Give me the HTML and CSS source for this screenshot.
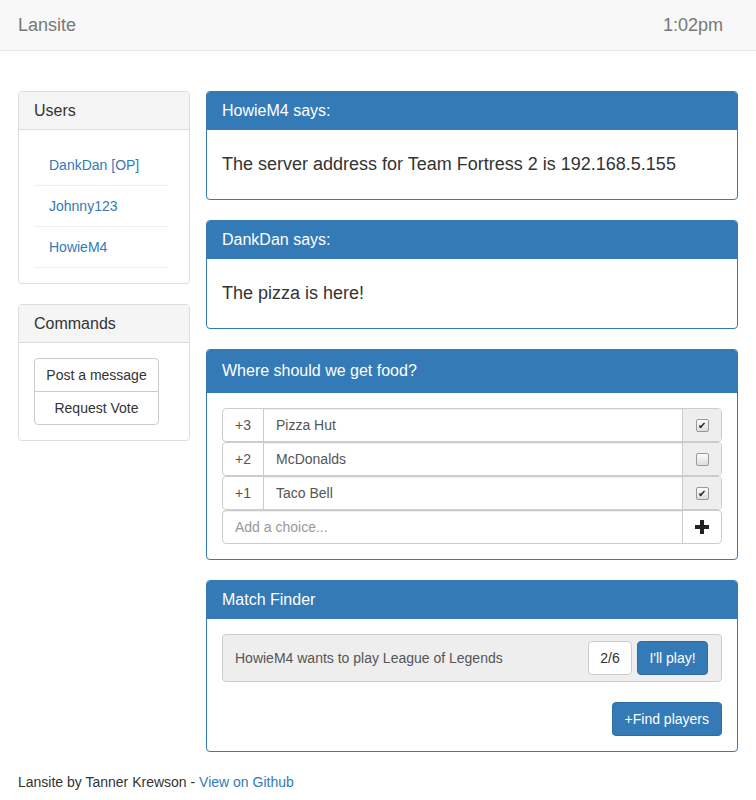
FILE: index.html
```html
<!DOCTYPE html>
<html>
<head>
<meta charset="utf-8">
<link rel="stylesheet" href="styles.css">
</head>
<body>
<nav class="navbar">
  <span class="brand">Lansite</span>
  <span class="clock">1:02pm</span>
</nav>
<main class="main">
  <aside class="side">
    <section class="panel panel-default">
      <div class="panel-heading">Users</div>
      <div class="panel-body">
        <ul class="user-list">
          <li><a href="#">DankDan [OP]</a></li>
          <li><a href="#">Johnny123</a></li>
          <li><a href="#">HowieM4</a></li>
        </ul>
      </div>
    </section>
    <section class="panel panel-default">
      <div class="panel-heading">Commands</div>
      <div class="panel-body">
        <div class="btn-group-vertical">
          <button class="btn">Post a message</button>
          <button class="btn">Request Vote</button>
        </div>
      </div>
    </section>
  </aside>
  <div class="stream">
    <section class="panel panel-primary">
      <div class="panel-heading">HowieM4 says:</div>
      <div class="panel-body"><h4 class="msg">The server address for Team Fortress 2 is 192.168.5.155</h4></div>
    </section>
    <section class="panel panel-primary">
      <div class="panel-heading">DankDan says:</div>
      <div class="panel-body"><h4 class="msg">The pizza is here!</h4></div>
    </section>
    <section class="panel panel-primary">
      <div class="panel-heading tall">Where should we get food?</div>
      <div class="panel-body">
        <div class="choice">
          <span class="count">+3</span>
          <span class="name">Pizza Hut</span>
          <span class="check-addon"><span class="cb checked">&#10004;</span></span>
        </div>
        <div class="choice">
          <span class="count">+2</span>
          <span class="name">McDonalds</span>
          <span class="check-addon"><span class="cb"></span></span>
        </div>
        <div class="choice">
          <span class="count">+1</span>
          <span class="name">Taco Bell</span>
          <span class="check-addon"><span class="cb checked">&#10004;</span></span>
        </div>
        <div class="choice add">
          <span class="placeholder">Add a choice...</span>
          <span class="plus-btn"><svg width="14" height="14" viewBox="0 0 14 14"><rect x="5" y="0" width="4" height="14" fill="#222"/><rect x="0" y="5" width="14" height="4" fill="#222"/></svg></span>
        </div>
      </div>
    </section>
    <section class="panel panel-primary">
      <div class="panel-heading">Match Finder</div>
      <div class="panel-body">
        <div class="match">
          <span class="match-text">HowieM4 wants to play League of Legends</span>
          <span class="slots">2/6</span>
          <button class="btn btn-primary play">I'll play!</button>
        </div>
        <div class="find-row">
          <button class="btn btn-primary">+Find players</button>
        </div>
      </div>
    </section>
  </div>
</main>
<footer class="footer">Lansite by Tanner Krewson - <a href="#">View on Github</a></footer>
</body>
</html>
```

FILE: styles.css
```css
* { box-sizing: border-box; }
body {
  margin: 0;
  font-family: "Liberation Sans", Arial, sans-serif;
  font-size: 14px;
  line-height: 20px;
  color: #333;
  background: #fff;
}
a { color: #337ab7; text-decoration: none; }

.navbar {
  height: 51px;
  background: #f8f8f8;
  border-bottom: 1px solid #e7e7e7;
  display: flex;
  align-items: center;
  justify-content: space-between;
  padding: 0 33px 0 18px;
  font-size: 18px;
  color: #777;
}

.main {
  display: grid;
  grid-template-columns: 172px 1fr;
  gap: 16px;
  padding: 40px 18px 0 18px;
}

.panel {
  border: 1px solid #ddd;
  border-radius: 4px;
  margin-bottom: 20px;
  background: #fff;
  overflow: hidden;
}
.panel-heading {
  padding: 10px 15px;
  font-size: 16px;
  line-height: 17px;
  border-bottom: 1px solid #ddd;
}
.panel-default .panel-heading { background: #f5f5f5; color: #333; }
.panel-primary { border-color: #337ab7; }
.panel-primary .panel-heading {
  background: #337ab7;
  border-bottom-color: #337ab7;
  color: #fff;
}
.panel-heading.tall { padding: 12px 15px 13px; }
.panel-body { padding: 15px; }

.user-list {
  list-style: none;
  margin: 0;
  padding: 0;
  width: 133px;
}
.user-list li {
  border-bottom: 1px solid #eee;
}
.user-list a {
  display: block;
  padding: 10px 15px;
}

.btn-group-vertical {
  display: flex;
  flex-direction: column;
  width: 125px;
}
.btn {
  font-family: inherit;
  font-size: 14px;
  line-height: 20px;
  padding: 6px 12px;
  border: 1px solid #ccc;
  border-radius: 4px;
  background: #fff;
  color: #333;
  white-space: nowrap;
}
.btn-group-vertical .btn { border-radius: 0; padding: 6px 8px; }
.btn-group-vertical .btn:first-child { border-radius: 4px 4px 0 0; }
.btn-group-vertical .btn:last-child { border-radius: 0 0 4px 4px; margin-top: -1px; }
.btn-primary {
  background: #337ab7;
  border-color: #2e6da4;
  color: #fff;
}

.msg {
  margin: 10px 0;
  font-size: 18px;
  font-weight: normal;
  line-height: 19px;
}

.choice {
  display: flex;
  height: 34px;
  border: 1px solid #ccc;
  border-radius: 4px;
  color: #555;
  overflow: hidden;
}
.count {
  width: 41px;
  display: flex;
  align-items: center;
  justify-content: center;
  border-right: 1px solid #ccc;
}
.name {
  flex: 1;
  display: flex;
  align-items: center;
  padding-left: 12px;
  box-shadow: inset 0 1px 1px rgba(0,0,0,.075);
}
.check-addon {
  width: 39px;
  background: #eee;
  border-left: 1px solid #ccc;
  display: flex;
  align-items: center;
  justify-content: center;
}
.cb {
  width: 13px;
  height: 13px;
  border: 1px solid #999;
  border-radius: 2px;
  background: linear-gradient(#fcfcfc, #dedede);
  font-size: 10px;
  line-height: 11px;
  text-align: center;
  color: #222;
}
.placeholder {
  flex: 1;
  display: flex;
  align-items: center;
  padding-left: 12px;
  color: #999;
  box-shadow: inset 0 1px 1px rgba(0,0,0,.075);
}
.plus-btn {
  width: 39px;
  border-left: 1px solid #ccc;
  display: flex;
  align-items: center;
  justify-content: center;
}

.match {
  display: flex;
  align-items: center;
  background: #eee;
  border: 1px solid #ccc;
  border-radius: 4px;
  padding: 6px 13px 6px 12px;
  color: #555;
}
.match-text { flex: 1; }
.slots {
  width: 44px;
  height: 34px;
  display: flex;
  align-items: center;
  justify-content: center;
  background: #fff;
  border: 1px solid #ccc;
  border-radius: 4px;
  color: #333;
}
.play {
  margin-left: 5px;
  padding: 6px 8px;
  width: 71px;
}
.find-row {
  display: flex;
  justify-content: flex-end;
  margin-top: 20px;
}

.footer {
  padding: 0 18px 20px;
  line-height: 20px;
}
```
